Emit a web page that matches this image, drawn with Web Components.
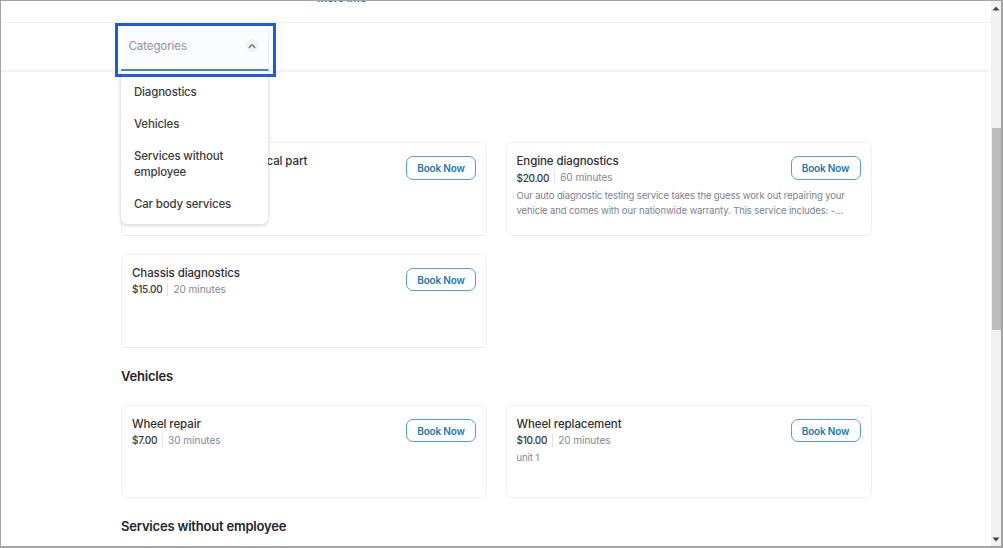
<!DOCTYPE html>
<html lang="en"><head><meta charset="utf-8"><title>Services</title>
<style>
html,body{margin:0;height:548px;overflow:hidden;background:#fff}
body{font-family:Inter,"Noto Sans",sans-serif;color:#2a2c33}
</style></head><body>
<template id="t-shell"><style>
:host{display:flex;box-sizing:border-box;width:1003px;height:548px;border:1px solid #a3a3a3;border-right-width:2px;border-top-width:1px;border-bottom-width:2px;overflow:hidden;background:#fff}
.main{flex:1;min-width:0;overflow:hidden}
</style><div class="main"><slot></slot></div><slot name="bar"></slot></template>

<template id="t-scroll"><style>
:host{display:flex;flex-direction:column;width:10px;flex:none;background:#f0f0f0;position:relative}
.arrow{height:14px;display:flex;align-items:center;justify-content:center;flex:none}
.track{flex:1;padding:113px 0 0 1px}
.thumb{height:202px;background:#bdbdbd}
</style>
<div class="arrow"><svg width="8" height="5" viewBox="0 0 8 5"><path d="M4 0.5 7.5 4.5H.5Z" fill="#444"/></svg></div>
<div class="track"><div class="thumb"></div></div>
<div class="arrow"><svg width="8" height="5" viewBox="0 0 8 5"><path d="M.5 .5H7.5L4 4.5Z" fill="#444"/></svg></div></template>

<template id="t-top"><style>
:host{display:block;height:21px;overflow:hidden}
.row{display:flex;margin-top:-11px;padding-left:316px;height:16px;align-items:center}
.link{font-size:11px;font-weight:600;color:#1a78b5;line-height:16px;letter-spacing:-.1px}
</style><div class="row"><span class="link">More info</span></div></template>

<template id="t-bar"><style>
:host{display:block;height:50px;box-sizing:border-box;border-top:1px solid #f2f2f4;border-bottom:2px solid #f2f2f4;padding-left:120px}
</style><slot></slot></template>

<template id="t-select"><style>
:host{display:block;position:relative;width:148px;height:47px;box-sizing:border-box;font-size:11.5px}
.head{display:flex;box-sizing:border-box;height:48px;padding:2px 9px 3px 7.5px;align-items:center;justify-content:space-between;background:#fbfcfe;border-bottom:2px solid #3b8fc9;border-right:1px solid #f0f1f4;color:#8a93a3}
.label{letter-spacing:-.08px}
.chev{width:13.5px;height:13.5px;border-radius:50%;background:#f0f1f3;display:flex;align-items:center;justify-content:center}
.menu{position:absolute;left:0;top:48px;width:147px;box-sizing:border-box;background:#fff;border-radius:0 0 6px 6px;box-shadow:0 1px 4px rgba(60,70,90,.28);padding:4.5px 0 4.5px;z-index:2}
.ring{position:absolute;left:-6px;top:0;width:161px;height:54px;box-sizing:border-box;border:3px solid #1f5ae2;pointer-events:none;z-index:3}
</style>
<div class="head"><span class="label">Categories</span><span class="chev"><svg width="8" height="6" viewBox="0 0 8 6"><path d="M1.2 4.5 4 1.7 6.8 4.5" fill="none" stroke="#5b6472" stroke-width="1.2" stroke-linecap="round" stroke-linejoin="round"/></svg></span></div>
<div class="menu"><slot></slot></div><div class="ring"></div></template>

<template id="t-item"><style>
:host{display:block;padding:8px 13px;font-size:11.5px;line-height:16px;font-weight:500;color:#3b3d42;letter-spacing:-.18px}
</style><slot></slot></template>

<template id="t-section"><style>
:host{display:block;padding:0 0 0 120px;width:751px;margin-top:18px}
:host([first]){margin-top:31px}
h2{margin:0 0 19px;font-size:13px;line-height:20px;font-weight:600;color:#23252b;letter-spacing:-.2px}
.grid{display:grid;grid-template-columns:366px 366px;gap:18px 18.5px}
</style><h2><slot name="title"></slot></h2><div class="grid"><slot></slot></div></template>

<template id="t-card"><style>
:host{display:flex;position:relative;justify-content:space-between;box-sizing:border-box;height:93.75px;border:1px solid #eeeff2;border-radius:6px;padding:9.5px 10px 0 10px;background:#fff}
.info{flex:1;min-width:0}
.title{font-size:11.5px;line-height:16px;font-weight:500;color:#2c2e34;letter-spacing:-.1px;padding-top:.5px;white-space:nowrap}
.meta{display:flex;align-items:center;font-size:10px;line-height:16px;margin-top:.5px}
.price{font-weight:500;color:#35373d;letter-spacing:-.3px}
.dur{color:#7d8694;letter-spacing:-.02px;border-left:1px solid #dfe1e5;margin-left:4.5px;padding-left:5.5px;line-height:13px}
.desc{font-size:9.5px;line-height:15px;color:#7b8290;margin-top:2px;width:343px;letter-spacing:-.12px}
.btn{position:absolute;right:10px;top:13px;box-sizing:border-box;width:70px;height:23.5px;border:1px solid #4f9fd2;border-radius:7px;background:#fff;color:#1a78b5;font:600 10px/20px Inter,sans-serif;letter-spacing:-.2px;text-align:center;padding:1px 0 0}
</style>
<div class="info"><div class="title"><slot name="title"></slot></div>
<div class="meta"><span class="price"><slot name="price"></slot></span><span class="dur"><slot name="dur"></slot></span></div>
<div class="desc"><slot name="desc"></slot></div></div>
<button class="btn">Book Now</button></template>

<x-shell>
  <x-topline></x-topline>
  <x-catbar><x-select>
    <x-item>Diagnostics</x-item><x-item>Vehicles</x-item><x-item>Services without employee</x-item><x-item>Car body services</x-item>
  </x-select></x-catbar>
  <x-section first><span slot="title">Diagnostics</span>
    <x-card><span slot="title">Diagnostics of the electrical part</span><span slot="price">$25.00</span><span slot="dur">40 minutes</span></x-card>
    <x-card><span slot="title">Engine diagnostics</span><span slot="price">$20.00</span><span slot="dur">60 minutes</span><span slot="desc">Our auto diagnostic testing service takes the guess work out repairing your vehicle and comes with our nationwide warranty. This service includes: -…</span></x-card>
    <x-card><span slot="title">Chassis diagnostics</span><span slot="price">$15.00</span><span slot="dur">20 minutes</span></x-card>
  </x-section>
  <x-section><span slot="title">Vehicles</span>
    <x-card><span slot="title">Wheel repair</span><span slot="price">$7.00</span><span slot="dur">30 minutes</span></x-card>
    <x-card><span slot="title">Wheel replacement</span><span slot="price">$10.00</span><span slot="dur">20 minutes</span><span slot="desc">unit 1</span></x-card>
  </x-section>
  <x-section><span slot="title">Services without employee</span></x-section>
  <x-scroll slot="bar"></x-scroll>
</x-shell>
<script>
const map={'x-shell':'t-shell','x-scroll':'t-scroll','x-topline':'t-top','x-catbar':'t-bar','x-select':'t-select','x-item':'t-item','x-section':'t-section','x-card':'t-card'};
for(const [n,id] of Object.entries(map)){
  customElements.define(n,class extends HTMLElement{constructor(){super();this.attachShadow({mode:'open'}).appendChild(document.getElementById(id).content.cloneNode(true));}});
}
</script>
</body></html>
